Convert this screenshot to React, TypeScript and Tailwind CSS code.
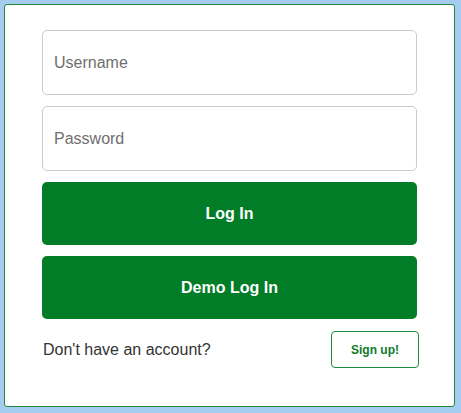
export default function App() {
  return (
    <div className="w-[461px] h-[413px] bg-[#a6cdef] pt-[4px] pl-[4px] pr-[6px] pb-[6px] font-['Liberation_Sans',Arial,sans-serif]">
      <div className="h-full bg-white border border-[#1e8a3c] rounded-[3px] pl-[37px] pr-[38px] pt-[25px]">
        <form className="flex flex-col gap-[11px] w-[375px]">
          <input
            className="h-[65px] border border-[#cccccc] rounded-[5px] px-[11px] text-[16px] text-[#555] placeholder:text-[#6f6f6f] outline-none"
            placeholder="Username"
          />
          <input
            type="password"
            className="h-[65px] border border-[#cccccc] rounded-[5px] px-[11px] text-[16px] text-[#555] placeholder:text-[#6f6f6f] outline-none"
            placeholder="Password"
          />
          <button
            type="button"
            className="h-[63px] rounded-[5px] bg-[#007d26] text-white font-bold text-[16px]"
          >
            Log In
          </button>
          <button
            type="button"
            className="h-[63px] rounded-[5px] bg-[#007d26] text-white font-bold text-[16px]"
          >
            Demo Log In
          </button>
        </form>
        <div className="mt-[12px] flex items-center justify-between w-[377px]">
          <span className="pl-[1px] text-[16px] text-[#333]">Don't have an account?</span>
          <button
            type="button"
            className="w-[88px] h-[37px] border border-[#1e8a3c] rounded-[4px] text-[#107a2c] font-bold text-[12px]"
          >
            Sign up!
          </button>
        </div>
      </div>
    </div>
  );
}
